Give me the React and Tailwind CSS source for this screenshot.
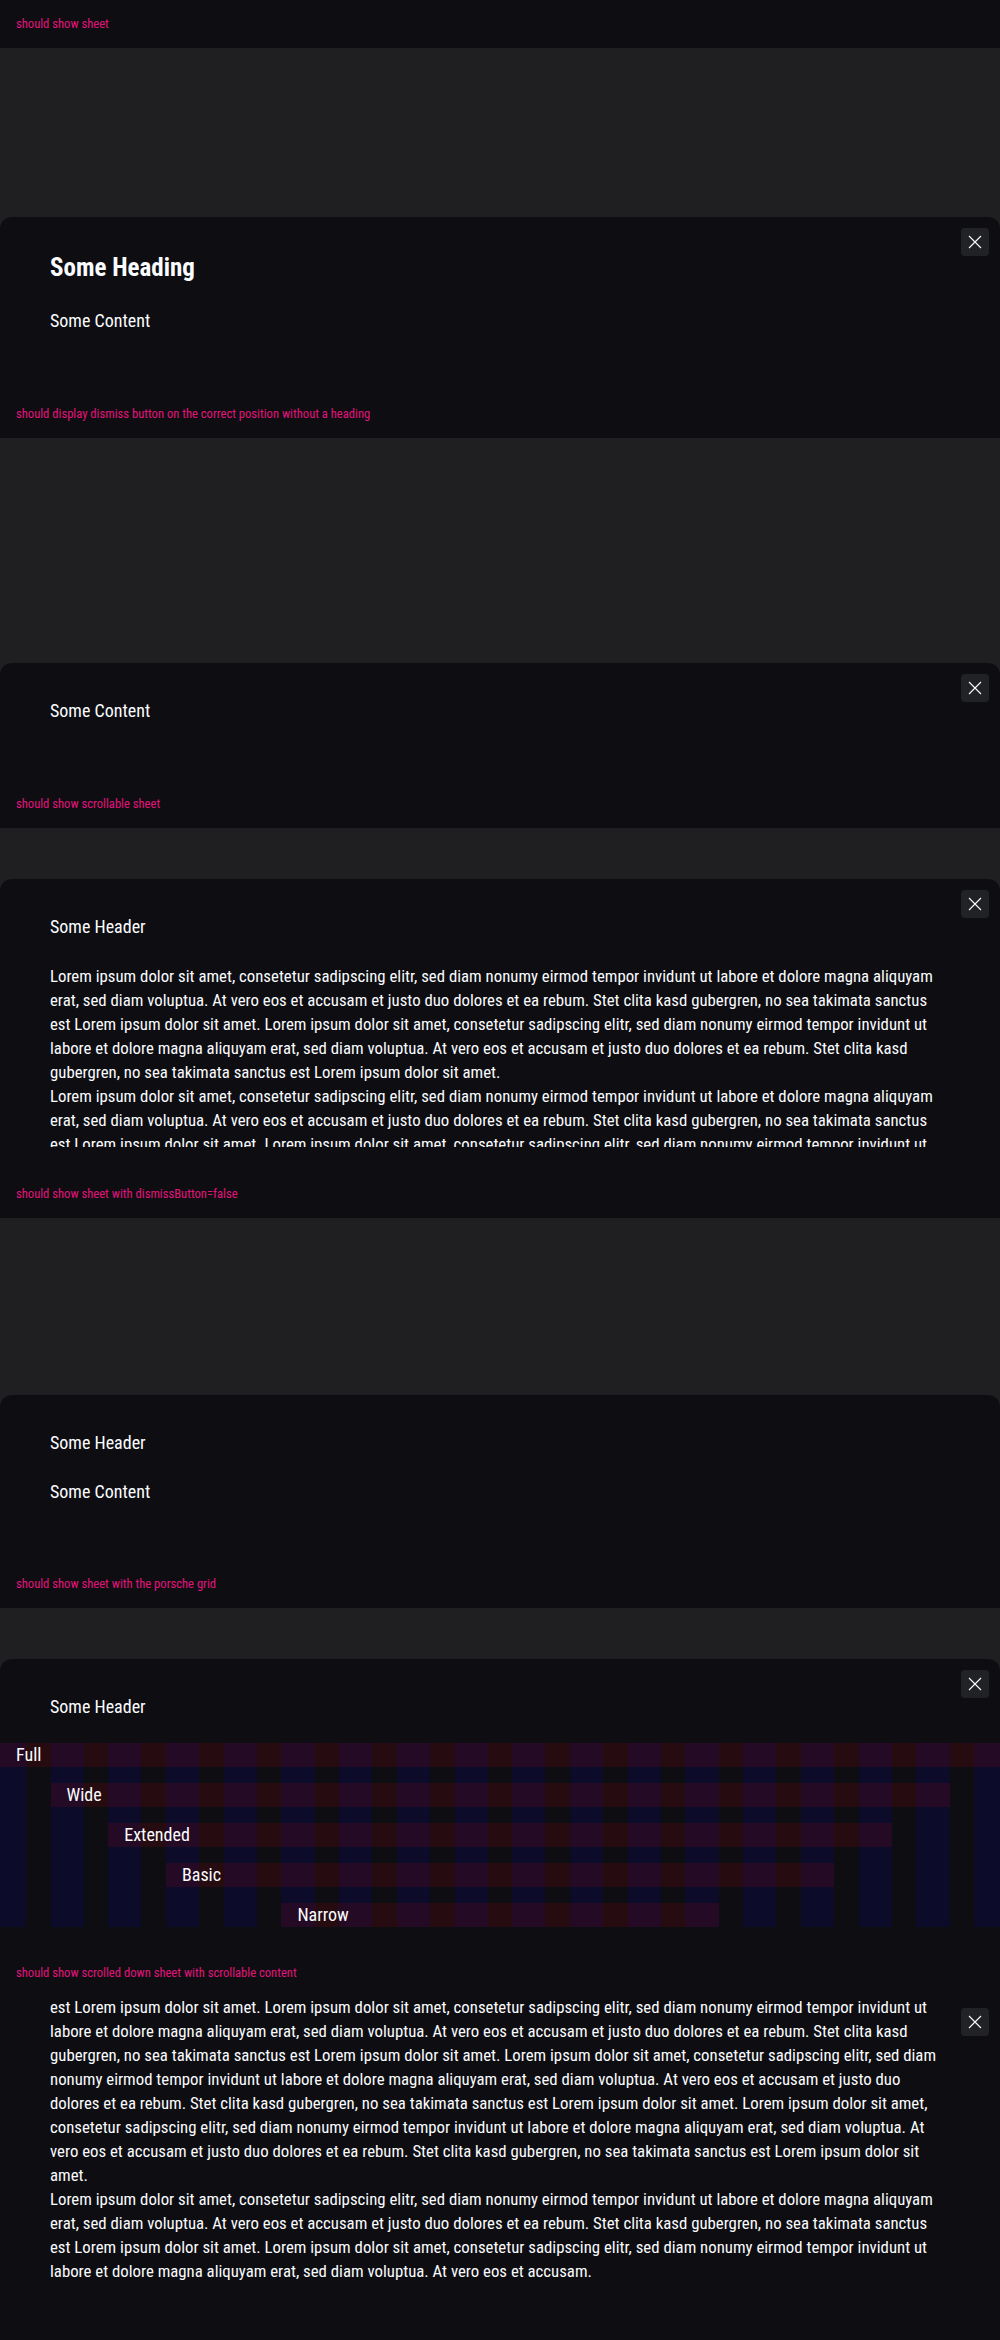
import React from "react";

const P1 = [
  "Lorem ipsum dolor sit amet, consetetur sadipscing elitr, sed diam nonumy eirmod tempor invidunt ut labore et dolore magna aliquyam",
  "erat, sed diam voluptua. At vero eos et accusam et justo duo dolores et ea rebum. Stet clita kasd gubergren, no sea takimata sanctus",
  "est Lorem ipsum dolor sit amet. Lorem ipsum dolor sit amet, consetetur sadipscing elitr, sed diam nonumy eirmod tempor invidunt ut",
  "labore et dolore magna aliquyam erat, sed diam voluptua. At vero eos et accusam et justo duo dolores et ea rebum. Stet clita kasd",
  "gubergren, no sea takimata sanctus est Lorem ipsum dolor sit amet.",
];

const P2 = [
  "Lorem ipsum dolor sit amet, consetetur sadipscing elitr, sed diam nonumy eirmod tempor invidunt ut labore et dolore magna aliquyam",
  "erat, sed diam voluptua. At vero eos et accusam et justo duo dolores et ea rebum. Stet clita kasd gubergren, no sea takimata sanctus",
  "est Lorem ipsum dolor sit amet. Lorem ipsum dolor sit amet, consetetur sadipscing elitr, sed diam nonumy eirmod tempor invidunt ut",
  "labore et dolore magna aliquyam erat, sed diam voluptua. At vero eos et accusam et justo duo dolores et ea rebum. Stet clita kasd",
  "gubergren, no sea takimata sanctus est Lorem ipsum dolor sit amet. Lorem ipsum dolor sit amet, consetetur sadipscing elitr, sed diam",
  "nonumy eirmod tempor invidunt ut labore et dolore magna aliquyam erat, sed diam voluptua. At vero eos et accusam et justo duo",
  "dolores et ea rebum. Stet clita kasd gubergren, no sea takimata sanctus est Lorem ipsum dolor sit amet. Lorem ipsum dolor sit amet,",
  "consetetur sadipscing elitr, sed diam nonumy eirmod tempor invidunt ut labore et dolore magna aliquyam erat, sed diam voluptua. At",
  "vero eos et accusam et justo duo dolores et ea rebum. Stet clita kasd gubergren, no sea takimata sanctus est Lorem ipsum dolor sit",
  "amet.",
];

const P3 = [
  "Lorem ipsum dolor sit amet, consetetur sadipscing elitr, sed diam nonumy eirmod tempor invidunt ut labore et dolore magna aliquyam",
  "erat, sed diam voluptua. At vero eos et accusam et justo duo dolores et ea rebum. Stet clita kasd gubergren, no sea takimata sanctus",
  "est Lorem ipsum dolor sit amet. Lorem ipsum dolor sit amet, consetetur sadipscing elitr, sed diam nonumy eirmod tempor invidunt ut",
  "labore et dolore magna aliquyam erat, sed diam voluptua. At vero eos et accusam.",
];

function Para({ lines }) {
  return (
    <p className="text-[16.8px] leading-6 text-[#fbfcff]">
      {lines.map((l, i) => (
        <span key={i} className="block whitespace-nowrap">
          {l}
        </span>
      ))}
    </p>
  );
}

function Label({ children }) {
  return (
    <div className="h-12 flex items-center px-4 bg-[#0e0e12]">
      <p className="text-[12.6px] leading-5 text-[#e2147c]">{children}</p>
    </div>
  );
}

function Dismiss() {
  return (
    <button
      type="button"
      aria-label="Dismiss"
      className="absolute top-[11px] right-[11px] w-7 h-7 rounded-[4px] bg-[#212225] flex items-center justify-center"
    >
      <svg width="14" height="14" viewBox="0 0 14 14" fill="none">
        <path d="M1 1L13 13M13 1L1 13" stroke="#fbfcff" strokeWidth="1.1" />
      </svg>
    </button>
  );
}

const COLS = [
  "col-start-1",
  "col-start-2",
  "col-start-3",
  "col-start-4",
  "col-start-5",
  "col-start-6",
  "col-start-7",
  "col-start-8",
  "col-start-9",
  "col-start-10",
  "col-start-11",
  "col-start-12",
  "col-start-13",
  "col-start-14",
  "col-start-15",
  "col-start-16",
  "col-start-17",
  "col-start-18",
];

function PorscheGrid() {
  const item = "h-6 pl-4 text-[18px] leading-6 text-[#fbfcff] bg-[rgba(255,0,0,0.1)]";
  return (
    <div className="grid grid-cols-[26px_repeat(16,minmax(0,1fr))_26px] grid-rows-[repeat(5,24px)] gap-x-[24.5px] gap-y-4">
      {COLS.map((c) => (
        <div key={c} className={`${c} row-start-1 row-end-6 bg-[rgba(0,0,255,0.1)]`} />
      ))}
      <div className={`col-start-1 col-end-19 row-start-1 ${item}`}>Full</div>
      <div className={`col-start-2 col-end-18 row-start-2 ${item}`}>Wide</div>
      <div className={`col-start-3 col-end-17 row-start-3 ${item}`}>Extended</div>
      <div className={`col-start-4 col-end-16 row-start-4 ${item}`}>Basic</div>
      <div className={`col-start-6 col-end-14 row-start-5 ${item}`}>Narrow</div>
    </div>
  );
}

const sheet = "relative bg-[#0e0e12] rounded-t-xl";
const backdrop = "bg-[#1f1f22]";
const text18 = "text-[18px] leading-[27px] text-[#fbfcff]";

export default function App() {
  return (
    <div className="w-full bg-[#0e0e12] font-['Liberation_Sans_Narrow','Roboto_Condensed','Roboto',sans-serif]">
      {/* 1 */}
      <Label>should show sheet</Label>
      <div className={`${backdrop} pt-[169px]`}>
        <div className={`${sheet} h-[173px] px-[50px] pt-[33px]`}>
          <Dismiss />
          <h2 className="text-[25px] leading-9 font-bold text-[#fbfcff]">Some Heading</h2>
          <p className={`${text18} mt-[21px]`}>Some Content</p>
        </div>
      </div>

      {/* 2 */}
      <Label>should display dismiss button on the correct position without a heading</Label>
      <div className={`${backdrop} pt-[225px]`}>
        <div className={`${sheet} h-[117px] px-[50px] pt-[34px]`}>
          <Dismiss />
          <p className={text18}>Some Content</p>
        </div>
      </div>

      {/* 3 */}
      <Label>should show scrollable sheet</Label>
      <div className={`${backdrop} pt-[51px]`}>
        <div className={`${sheet} h-[291px]`}>
          <Dismiss />
          <div className="h-[268px] overflow-hidden px-[50px] pt-[34px]">
            <p className={text18}>Some Header</p>
            <div className="mt-6">
              <Para lines={P1} />
              <Para lines={P2} />
            </div>
          </div>
        </div>
      </div>

      {/* 4 */}
      <Label>should show sheet with dismissButton=false</Label>
      <div className={`${backdrop} pt-[177px]`}>
        <div className={`${sheet} h-[165px] px-[50px] pt-[34px]`}>
          <p className={text18}>Some Header</p>
          <p className={`${text18} mt-[22px]`}>Some Content</p>
        </div>
      </div>

      {/* 5 */}
      <Label>should show sheet with the porsche grid</Label>
      <div className={`${backdrop} pt-[51px]`}>
        <div className={`${sheet} h-[290px] pt-[34px]`}>
          <Dismiss />
          <p className={`${text18} px-[50px]`}>Some Header</p>
          <div className="mt-[23px]">
            <PorscheGrid />
          </div>
        </div>
      </div>

      {/* 6 */}
      <Label>should show scrolled down sheet with scrollable content</Label>
      <div className="relative h-[343px] overflow-hidden bg-[#0e0e12]">
        <Dismiss />
        <div className="px-[50px] -mt-[2px]">
          <Para lines={P2.slice(2)} />
          <Para lines={P3} />
        </div>
      </div>
    </div>
  );
}
